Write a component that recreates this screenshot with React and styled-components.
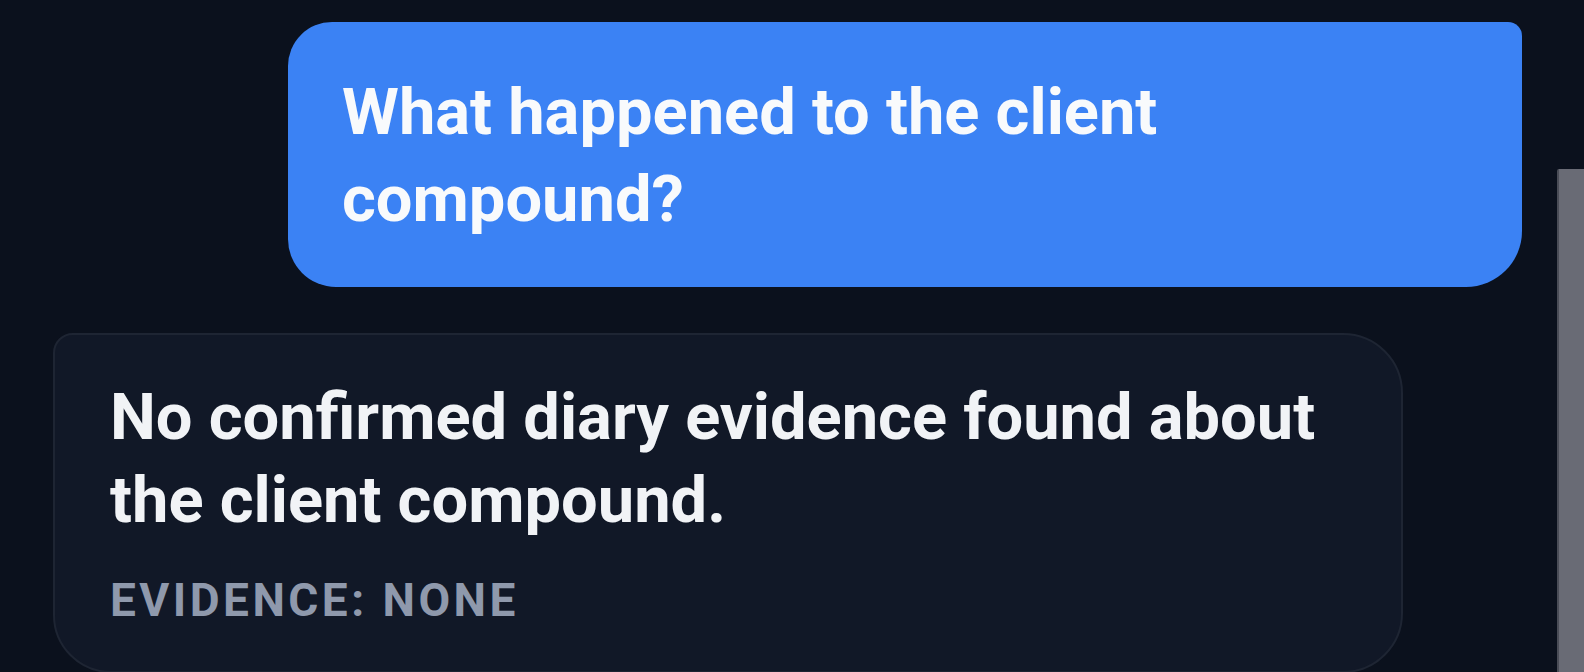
import styled, { createGlobalStyle } from "styled-components";

const GlobalStyle = createGlobalStyle`
  html, body {
    margin: 0;
    padding: 0;
    background: #0b111d;
    overflow: hidden;
  }

  body {
    font-family: Roboto, "Noto Sans", "Liberation Sans", sans-serif;
    -webkit-font-smoothing: antialiased;
  }
`;

const messages = [
  { id: 1, role: "user", text: "What happened to the client compound?" },
  {
    id: 2,
    role: "assistant",
    text: "No confirmed diary evidence found about the client compound.",
    evidence: "none",
  },
];

export default function App() {
  return (
    <>
      <GlobalStyle />
      <Screen>
        <Thread>
          {messages.map((m) =>
            m.role === "user" ? (
              <UserRow key={m.id}>
                <UserBubble>{m.text}</UserBubble>
              </UserRow>
            ) : (
              <AgentRow key={m.id}>
                <AgentBubble>
                  <AgentText>{m.text}</AgentText>
                  <EvidenceTag>Evidence: {m.evidence}</EvidenceTag>
                </AgentBubble>
              </AgentRow>
            )
          )}
        </Thread>
        <ScrollRail>
          <ScrollThumb />
        </ScrollRail>
      </Screen>
    </>
  );
}

const Screen = styled.div`
  display: flex;
  width: 100vw;
  height: 100vh;
  overflow: hidden;
`;

const Thread = styled.div`
  flex: 1;
  display: flex;
  flex-direction: column;
  gap: 46px;
  padding: 22px 35px 0 53px;
  box-sizing: border-box;
`;

const UserRow = styled.div`
  display: flex;
  justify-content: flex-end;
`;

const AgentRow = styled.div`
  display: flex;
  justify-content: flex-start;
`;

const UserBubble = styled.div`
  max-width: 1234px;
  box-sizing: border-box;
  padding: 47px 56px 44px 54px;
  background: #3b82f4;
  border-radius: 44px 14px 56px 48px;
  color: #f8fafc;
  font-size: 65px;
  font-weight: 700;
  line-height: 87px;
`;

const AgentBubble = styled.div`
  max-width: 1350px;
  box-sizing: border-box;
  padding: 41px 56px 44px 55px;
  background: #111827;
  border: 2px solid #1e2533;
  border-radius: 20px 60px 60px 58px;
`;

const AgentText = styled.div`
  color: #f1f3f6;
  font-size: 65px;
  font-weight: 700;
  line-height: 83px;
`;

const EvidenceTag = styled.div`
  margin-top: 31px;
  color: #8f99ac;
  font-size: 46px;
  font-weight: 700;
  line-height: 54px;
  letter-spacing: 0.075em;
  text-transform: uppercase;
`;

const ScrollRail = styled.div`
  width: 27px;
  display: flex;
  flex-direction: column;
`;

const ScrollThumb = styled.div`
  flex: 1;
  margin-top: 169px;
  background: #696b75;
  border-left: 2px solid #4a4d57;
  border-top-left-radius: 2px;
`;
